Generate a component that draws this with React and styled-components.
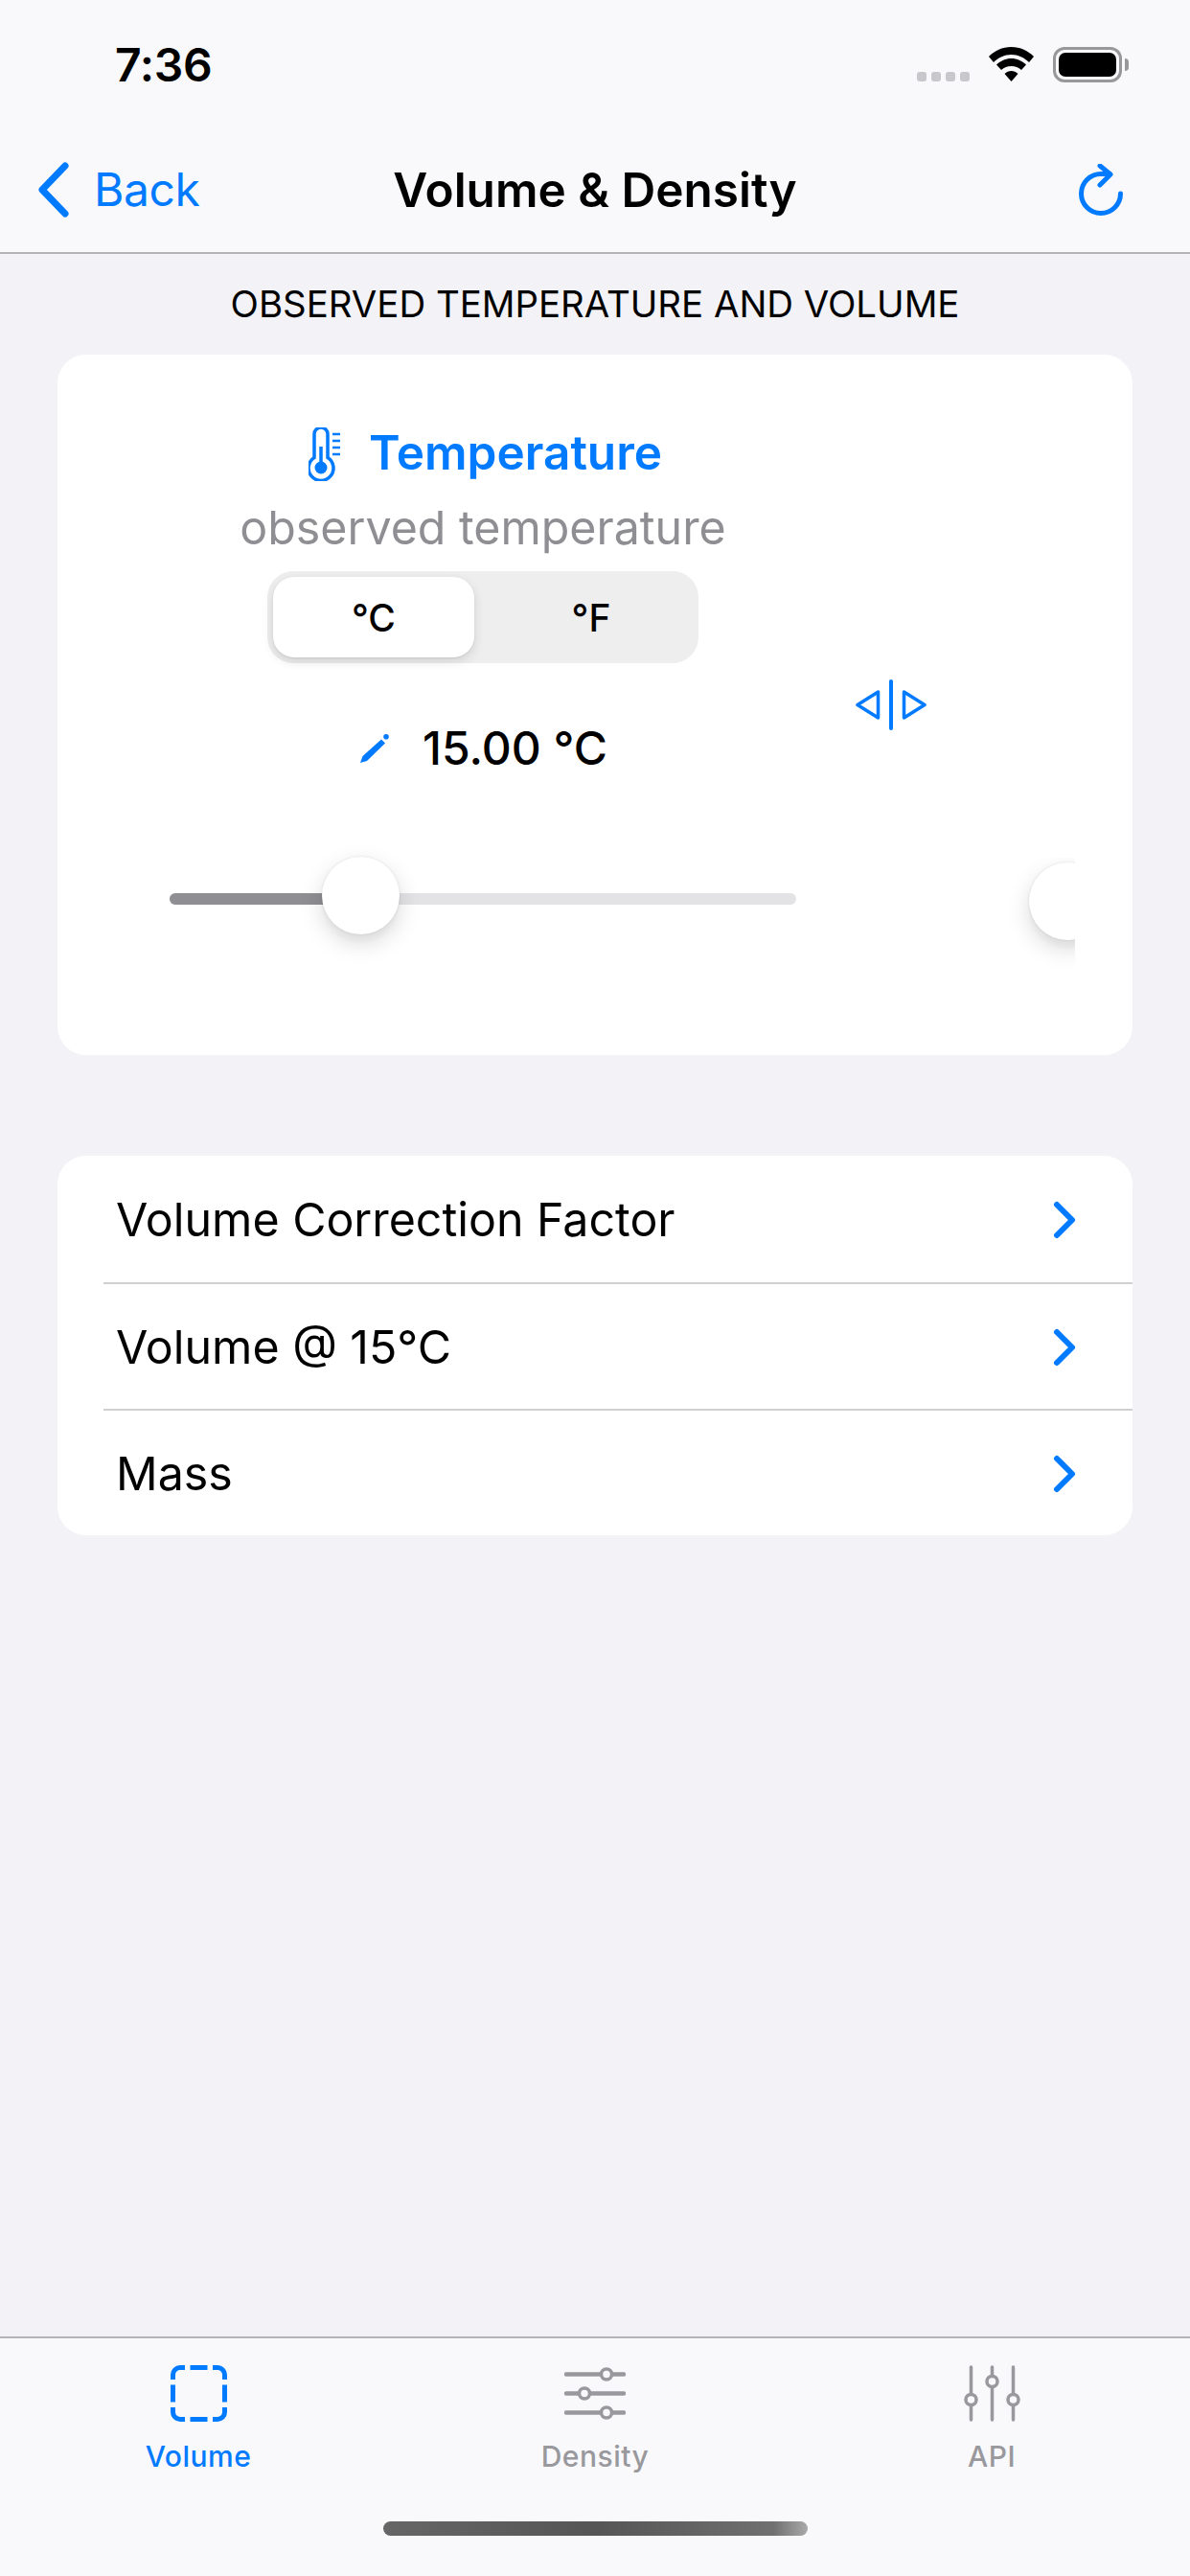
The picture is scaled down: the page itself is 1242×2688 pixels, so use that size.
import React from 'react';
import styled, { createGlobalStyle } from 'styled-components';

const BLUE = '#007aff';
const GRAY = '#8e8e93';

const GlobalStyle = createGlobalStyle`
  html, body {
    margin: 0;
    padding: 0;
    background: #f2f2f7;
  }
  * {
    box-sizing: border-box;
  }
`;

const App = () => {
  return (
    <Screen>
      <GlobalStyle />
      <TopBar>
        <StatusBar>
          <Time>7:36</Time>
          <StatusIcons>
            <SignalDots>
              <SignalDot />
              <SignalDot />
              <SignalDot />
              <SignalDot />
            </SignalDots>
            <svg width="47" height="36" viewBox="0 0 47 36">
              <path d="M23.5 0C14 0 6 4 0 10L5 16C10 11 16.5 8 23.5 8C30.5 8 37 11 42 16L47 10C41 4 33 0 23.5 0Z" />
              <path d="M23.5 12C17.5 12 12.5 14.5 8 18.5L13 24C16 21.5 19.5 20 23.5 20C27.5 20 31 21.5 34 24L39 18.5C34.5 14.5 29.5 12 23.5 12Z" />
              <path d="M23.5 25C21 25 18.5 26 16.5 28L23.5 36L30.5 28C28.5 26 26 25 23.5 25Z" />
            </svg>
            <Battery>
              <BatteryFill />
            </Battery>
            <BatteryNub />
          </StatusIcons>
        </StatusBar>
        <NavBar>
          <BackButton>
            <svg width="32" height="58" viewBox="0 0 32 58" fill="none" stroke={BLUE} strokeWidth="7" strokeLinecap="round" strokeLinejoin="round">
              <path d="M28 4L4 29L28 54" />
            </svg>
            <BackLabel>Back</BackLabel>
          </BackButton>
          <NavTitle>Volume &amp; Density</NavTitle>
          <RefreshButton>
            <svg width="46" height="54" viewBox="0 0 46 54" fill="none" stroke={BLUE} strokeWidth="5" strokeLinecap="round" strokeLinejoin="round">
              <path d="M43.5 31A20.5 20.5 0 1 1 23 10.5H32" />
              <path d="M22 2L33 11L22 22" />
            </svg>
          </RefreshButton>
        </NavBar>
      </TopBar>

      <Main>
        <SectionLabel>OBSERVED TEMPERATURE AND VOLUME</SectionLabel>
        <InputCard>
          <CardPanels>
            <TemperaturePanel>
              <Heading>
                <svg width="33" height="56" viewBox="0 0 33 56">
                  <path d="M6 31.5V7a7 7 0 0 1 14 0V31.5a13 13 0 1 1-14 0Z" fill="none" stroke={BLUE} strokeWidth="3.5" />
                  <path d="M13 20V42" stroke={BLUE} strokeWidth="3.5" />
                  <circle cx="13" cy="42" r="6.5" fill={BLUE} />
                  <path d="M25 7H33M25 14H33M25 21H33M25 28H33" stroke={BLUE} strokeWidth="2.5" />
                </svg>
                <HeadingText>Temperature</HeadingText>
              </Heading>
              <Caption>observed temperature</Caption>
              <Segmented>
                <Segment $active>°C</Segment>
                <Segment>°F</Segment>
              </Segmented>
              <ValueRow>
                <svg width="30" height="30" viewBox="0 0 30 30" fill={BLUE}>
                  <path d="M0 30L2.5 23L22 5.5L26 9.5L7 28Z" />
                  <circle cx="27" cy="2.8" r="2.8" />
                </svg>
                <ValueText>15.00 °C</ValueText>
              </ValueRow>
              <SliderTrack>
                <SliderFill style={{ width: 180 }} />
                <SliderThumb />
              </SliderTrack>
            </TemperaturePanel>

            <SplitHandle>
              <svg width="74" height="53" viewBox="0 0 74 53" fill="none" stroke={BLUE} strokeWidth="3.5" strokeLinejoin="round" strokeLinecap="round">
                <path d="M2 26.5L23.5 13V40Z" />
                <path d="M37 2V51" strokeWidth="4" />
                <path d="M72 26.5L50.5 13V40Z" />
              </svg>
            </SplitHandle>

            <NextPanelClip>
              <ClippedThumb />
            </NextPanelClip>
          </CardPanels>
        </InputCard>

        <ResultList>
          <ResultRow>
            <ResultLabel>Volume Correction Factor</ResultLabel>
            <Chevron />
          </ResultRow>
          <ResultRow $divider>
            <ResultLabel>Volume @ 15°C</ResultLabel>
            <Chevron />
          </ResultRow>
          <ResultRow $divider>
            <ResultLabel>Mass</ResultLabel>
            <Chevron />
          </ResultRow>
        </ResultList>
      </Main>

      <TabBar>
        <Tabs>
          <Tab $active>
            <svg width="59" height="59" viewBox="0 0 59 59" fill="none" stroke={BLUE} strokeWidth="5">
              <path d="M2.5 15V10A7.5 7.5 0 0 1 10 2.5H15" />
              <path d="M44 2.5H49A7.5 7.5 0 0 1 56.5 10V15" />
              <path d="M56.5 44V49A7.5 7.5 0 0 1 49 56.5H44" />
              <path d="M15 56.5H10A7.5 7.5 0 0 1 2.5 49V44" />
              <path d="M20.5 2.5H38.5M20.5 56.5H38.5M2.5 20.5V38.5M56.5 20.5V38.5" />
            </svg>
            <TabLabel>Volume</TabLabel>
          </Tab>
          <Tab>
            <svg width="64" height="59" viewBox="0 0 64 59" fill="none" stroke="#98989d" strokeWidth="4.5" strokeLinecap="round">
              <path d="M2 9.5H37M51 9.5H62M2 29.5H14M28 29.5H62M2 49.5H37M51 49.5H62" />
              <circle cx="44" cy="9.5" r="5.5" strokeWidth="3.5" />
              <circle cx="21" cy="29.5" r="5.5" strokeWidth="3.5" />
              <circle cx="44" cy="49.5" r="5.5" strokeWidth="3.5" />
            </svg>
            <TabLabel>Density</TabLabel>
          </Tab>
          <Tab>
            <svg width="59" height="59" viewBox="0 0 59 59" fill="none" stroke="#98989d" strokeWidth="3.5" strokeLinecap="round">
              <path d="M7.5 2V29M7.5 43V57M29.5 2V10M29.5 24V57M51.5 2V29M51.5 43V57" />
              <circle cx="7.5" cy="36" r="5.5" />
              <circle cx="29.5" cy="17" r="5.5" />
              <circle cx="51.5" cy="36" r="5.5" />
            </svg>
            <TabLabel>API</TabLabel>
          </Tab>
        </Tabs>
        <HomeIndicator />
      </TabBar>
    </Screen>
  );
};

const Chevron = () => (
  <ChevronIcon width="26" height="42" viewBox="0 0 26 42" fill="none" stroke={BLUE} strokeWidth="6" strokeLinecap="round" strokeLinejoin="round">
    <path d="M5 5L21 21L5 37" />
  </ChevronIcon>
);

export default App;

const Screen = styled.div`
  width: 1242px;
  height: 2688px;
  display: flex;
  flex-direction: column;
  background: #f2f2f7;
  font-family: Inter, 'Liberation Sans', sans-serif;
  color: #000;
  overflow: hidden;
`;

const TopBar = styled.header`
  flex: none;
  height: 265px;
  background: #f9f9fc;
  border-bottom: 2px solid #b4b4b6;
`;

const StatusBar = styled.div`
  height: 132px;
  display: flex;
  justify-content: space-between;
  align-items: flex-start;
  padding: 49px 64px 0 120px;
`;

const Time = styled.div`
  font-size: 48px;
  font-weight: 600;
  line-height: 38px;
  letter-spacing: -0.3px;
`;

const StatusIcons = styled.div`
  display: flex;
  align-items: flex-start;
`;

const SignalDots = styled.div`
  display: flex;
  gap: 5px;
  margin: 26px 20px 0 0;
`;

const SignalDot = styled.span`
  width: 10px;
  height: 10px;
  border-radius: 3px;
  background: #c7c7cc;
`;

const Battery = styled.div`
  width: 72px;
  height: 37px;
  margin-left: 20px;
  padding: 3px;
  border: 3px solid #98989b;
  border-radius: 12px;
`;

const BatteryFill = styled.div`
  width: 100%;
  height: 100%;
  border-radius: 7px;
  background: #000;
`;

const BatteryNub = styled.div`
  width: 4px;
  height: 13px;
  margin: 12px 0 0 3px;
  border-radius: 0 4px 4px 0;
  background: #98989b;
`;

const NavBar = styled.nav`
  height: 131px;
  display: grid;
  grid-template-columns: 1fr auto 1fr;
  align-items: center;
`;

const BackButton = styled.div`
  display: flex;
  align-items: center;
  gap: 26px;
  padding-left: 40px;
`;

const BackLabel = styled.span`
  font-size: 48px;
  color: ${BLUE};
  line-height: 60px;
  letter-spacing: -0.4px;
`;

const NavTitle = styled.h1`
  margin: 0;
  font-size: 49.5px;
  font-weight: 600;
  line-height: 60px;
`;

const RefreshButton = styled.div`
  display: flex;
  justify-content: flex-end;
  padding-right: 70px;
`;

const Main = styled.main`
  flex: 1;
  padding: 0 60px;
`;

const SectionLabel = styled.div`
  height: 105px;
  padding-bottom: 2px;
  display: flex;
  align-items: center;
  justify-content: center;
  font-size: 38.4px;
  line-height: 44px;
`;

const InputCard = styled.section`
  height: 731px;
  padding: 0 60px;
  background: #fff;
  border-radius: 30px;
`;

const CardPanels = styled.div`
  display: flex;
  width: 1002px;
  height: 100%;
`;

const TemperaturePanel = styled.div`
  flex: none;
  width: 768px;
  display: flex;
  flex-direction: column;
  align-items: center;
  padding-top: 76px;
`;

const Heading = styled.div`
  display: flex;
  align-items: center;
  gap: 30px;
  height: 56px;
  margin-left: 5px;
`;

const HeadingText = styled.span`
  font-size: 49.5px;
  font-weight: 600;
  line-height: 56px;
  color: ${BLUE};
  margin-top: -5px;
`;

const Caption = styled.div`
  margin-top: 20px;
  font-size: 48.3px;
  line-height: 58px;
  color: ${GRAY};
`;

const Segmented = styled.div`
  display: flex;
  width: 450px;
  height: 96px;
  margin-top: 16px;
  padding: 6px;
  background: #eeeeef;
  border-radius: 27px;
`;

const Segment = styled.div`
  flex: ${(props) => (props.$active ? '0 0 210px' : '1')};
  display: flex;
  align-items: center;
  justify-content: center;
  padding-left: ${(props) => (props.$active ? '0' : '16px')};
  font-size: 39px;
  font-weight: 500;
  border-radius: 22px;
  background: ${(props) => (props.$active ? '#fff' : 'transparent')};
  box-shadow: ${(props) => (props.$active ? '0 4px 12px rgba(0, 0, 0, 0.12), 0 1px 2px rgba(0, 0, 0, 0.08)' : 'none')};
`;

const ValueRow = styled.div`
  display: flex;
  align-items: center;
  gap: 35px;
  height: 60px;
  margin: 59px 0 0 2px;
`;

const ValueText = styled.span`
  font-size: 48px;
  font-weight: 550;
  line-height: 60px;
`;

const SliderTrack = styled.div`
  position: relative;
  width: 654px;
  height: 12px;
  margin-top: 121px;
  border-radius: 6px;
  background: #e3e3e6;
`;

const SliderFill = styled.div`
  height: 100%;
  border-radius: 6px;
  background: ${GRAY};
`;

const SliderThumb = styled.div`
  position: absolute;
  top: -38px;
  left: 159px;
  width: 81px;
  height: 81px;
  border-radius: 50%;
  background: #fff;
  box-shadow: 0 9px 24px rgba(0, 0, 0, 0.15), 0 9px 3px rgba(0, 0, 0, 0.02), 0 0 3px rgba(0, 0, 0, 0.1);
`;

const SplitHandle = styled.div`
  flex: none;
  width: 84px;
  padding: 339px 0 0 5px;
`;

const NextPanelClip = styled.div`
  flex: none;
  width: 150px;
  height: 130px;
  margin-top: 525px;
  padding: 5px 0 0 102px;
  overflow: hidden;
`;

const ClippedThumb = styled.div`
  width: 81px;
  height: 81px;
  border-radius: 50%;
  background: #fff;
  box-shadow: 0 9px 24px rgba(0, 0, 0, 0.15), 0 9px 3px rgba(0, 0, 0, 0.02), 0 0 3px rgba(0, 0, 0, 0.1);
`;

const ResultList = styled.section`
  margin-top: 105px;
  background: #fff;
  border-radius: 30px;
  padding-left: 48px;
`;

const ResultRow = styled.div`
  height: 132px;
  display: flex;
  align-items: center;
  justify-content: space-between;
  padding: 2px 58px 0 13px;
  border-top: ${(props) => (props.$divider ? '2px solid #d0d0d3' : 'none')};
`;

const ResultLabel = styled.span`
  font-size: 48.3px;
  line-height: 60px;
`;

const ChevronIcon = styled.svg`
  flex: none;
`;

const TabBar = styled.footer`
  flex: none;
  height: 250px;
  background: #f9f9fc;
  border-top: 2px solid #b4b4b6;
`;

const Tabs = styled.div`
  display: grid;
  grid-template-columns: repeat(3, 1fr);
  padding-top: 28px;
`;

const Tab = styled.div`
  display: flex;
  flex-direction: column;
  align-items: center;
  gap: 18px;
  color: ${(props) => (props.$active ? BLUE : '#98989d')};
`;

const TabLabel = styled.span`
  font-size: 30px;
  font-weight: 500;
  line-height: 36px;
  letter-spacing: 0.5px;
`;

const HomeIndicator = styled.div`
  width: 443px;
  height: 15px;
  margin: 50px auto 0 400px;
  border-radius: 8px;
  background: linear-gradient(to right, #666 0%, #555 50%, #707070 92%, #aaa 100%);
`;
